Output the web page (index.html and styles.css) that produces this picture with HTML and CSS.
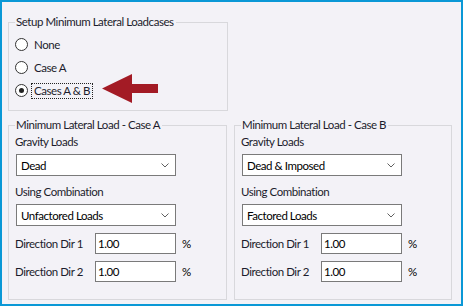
FILE: index.html
```html
<!DOCTYPE html>
<html lang="en">
<head>
    <meta charset="UTF-8">
    <title>Minimum Lateral Loadcases</title>
    <link rel="stylesheet" href="styles.css">
</head>
<body>
    <div class="window">

        <!-- Loadcase selection -->
        <fieldset class="group group-setup">
            <legend>Setup Minimum Lateral Loadcases</legend>
            <div class="radio-row">
                <span class="radio"></span>
                <span class="radio-label">None</span>
            </div>
            <div class="radio-row">
                <span class="radio"></span>
                <span class="radio-label">Case A</span>
            </div>
            <div class="radio-row">
                <span class="radio checked"></span>
                <span class="radio-label focused">Cases A &amp; B</span>
                <svg class="arrow" width="56" height="30" viewBox="0 0 56 30">
                    <polygon points="0,14.5 30,0 30,10 56,10 56,19 30,19 30,29" fill="#a31b25"/>
                </svg>
            </div>
        </fieldset>

        <div class="cases">
            <fieldset class="group case">
                <legend>Minimum Lateral Load - Case A</legend>
                <div class="field-label">Gravity Loads</div>
                <div class="select">
                    <span>Dead</span>
                    <svg class="chevron" width="8" height="5" viewBox="0 0 8 5"><polyline points="0.5,0.5 4,4 7.5,0.5" fill="none" stroke="#606060" stroke-width="1"/></svg>
                </div>
                <div class="field-label spaced">Using Combination</div>
                <div class="select">
                    <span>Unfactored Loads</span>
                    <svg class="chevron" width="8" height="5" viewBox="0 0 8 5"><polyline points="0.5,0.5 4,4 7.5,0.5" fill="none" stroke="#606060" stroke-width="1"/></svg>
                </div>
                <div class="input-row first">
                    <span class="input-label">Direction Dir 1</span>
                    <span class="input">1.00</span>
                    <span class="unit">%</span>
                </div>
                <div class="input-row">
                    <span class="input-label">Direction Dir 2</span>
                    <span class="input">1.00</span>
                    <span class="unit">%</span>
                </div>
            </fieldset>

            <fieldset class="group case">
                <legend>Minimum Lateral Load - Case B</legend>
                <div class="field-label">Gravity Loads</div>
                <div class="select">
                    <span>Dead &amp; Imposed</span>
                    <svg class="chevron" width="8" height="5" viewBox="0 0 8 5"><polyline points="0.5,0.5 4,4 7.5,0.5" fill="none" stroke="#606060" stroke-width="1"/></svg>
                </div>
                <div class="field-label spaced">Using Combination</div>
                <div class="select">
                    <span>Factored Loads</span>
                    <svg class="chevron" width="8" height="5" viewBox="0 0 8 5"><polyline points="0.5,0.5 4,4 7.5,0.5" fill="none" stroke="#606060" stroke-width="1"/></svg>
                </div>
                <div class="input-row first">
                    <span class="input-label">Direction Dir 1</span>
                    <span class="input">1.00</span>
                    <span class="unit">%</span>
                </div>
                <div class="input-row">
                    <span class="input-label">Direction Dir 2</span>
                    <span class="input">1.00</span>
                    <span class="unit">%</span>
                </div>
            </fieldset>
        </div>

    </div>
</body>
</html>
```

FILE: styles.css
```css
/* Dialog panel: blue frame, light form background */

html, body {
    margin: 0;
    padding: 0;
}

body {
    font-family: Lato, "Open Sans", sans-serif;
    font-size: 11.5px;
    letter-spacing: -0.45px;
    color: #1c1c2c;
}

.window {
    width: 463px;
    height: 306px;
    box-sizing: border-box;
    border: 2px solid #0a98d6;
    background-color: #f3f2f7;
    padding: 13px 0 0 6px;
}

/* --- Group boxes --- */

.group {
    margin: 0;
    padding: 0 6px;
    border: 1px solid #d8d8dc;
    box-sizing: border-box;
    min-width: 0;
}

.group legend {
    padding: 0 2px 0 1px;
    line-height: 14px;
    height: 14px;
}

.group-setup {
    width: 220px;
    height: 96px;
    padding-top: 4px;
}

/* --- Radio buttons --- */

.radio-row {
    display: flex;
    align-items: center;
    height: 23px;
}

.radio {
    width: 11px;
    height: 11px;
    border: 1px solid #333;
    border-radius: 50%;
    background-color: #fff;
    margin-right: 5px;
    position: relative;
    flex-shrink: 0;
}

.radio.checked::after {
    content: "";
    position: absolute;
    left: 3px;
    top: 3px;
    width: 5px;
    height: 5px;
    border-radius: 50%;
    background-color: #222;
}

.radio-label {
    line-height: 14px;
    padding: 0 2px;
    margin-left: -2px;
    border: 1px dotted transparent;
}

.radio-label.focused {
    border-color: #222;
}

.arrow {
    margin-left: 9px;
    margin-top: -3px;
}

/* --- Lower cases --- */

.cases {
    display: flex;
    gap: 7px;
    margin-top: 7px;
}

.case {
    height: 182px;
    padding-top: 3px;
}

.case:first-child {
    width: 219px;
}

.case:last-child {
    width: 218px;
}

.field-label {
    line-height: 14px;
}

.field-label.spaced {
    margin-top: 9px;
}

.select {
    display: flex;
    align-items: center;
    justify-content: space-between;
    width: 160px;
    height: 22px;
    box-sizing: border-box;
    margin: 5px 0 0 1px;
    padding: 0 6px 0 4px;
    border: 1px solid #7a7a7a;
    background-color: #fff;
    color: #000;
}

.input-row {
    display: flex;
    align-items: center;
    margin-top: 7px;
}

.input-label {
    width: 80px;
    flex-shrink: 0;
}

.input {
    width: 81px;
    height: 21px;
    line-height: 19px;
    box-sizing: border-box;
    padding-left: 2px;
    border: 1px solid #7a7a7a;
    background-color: #fff;
    color: #000;
}

.unit {
    margin-left: 6px;
    color: #000;
}
```
